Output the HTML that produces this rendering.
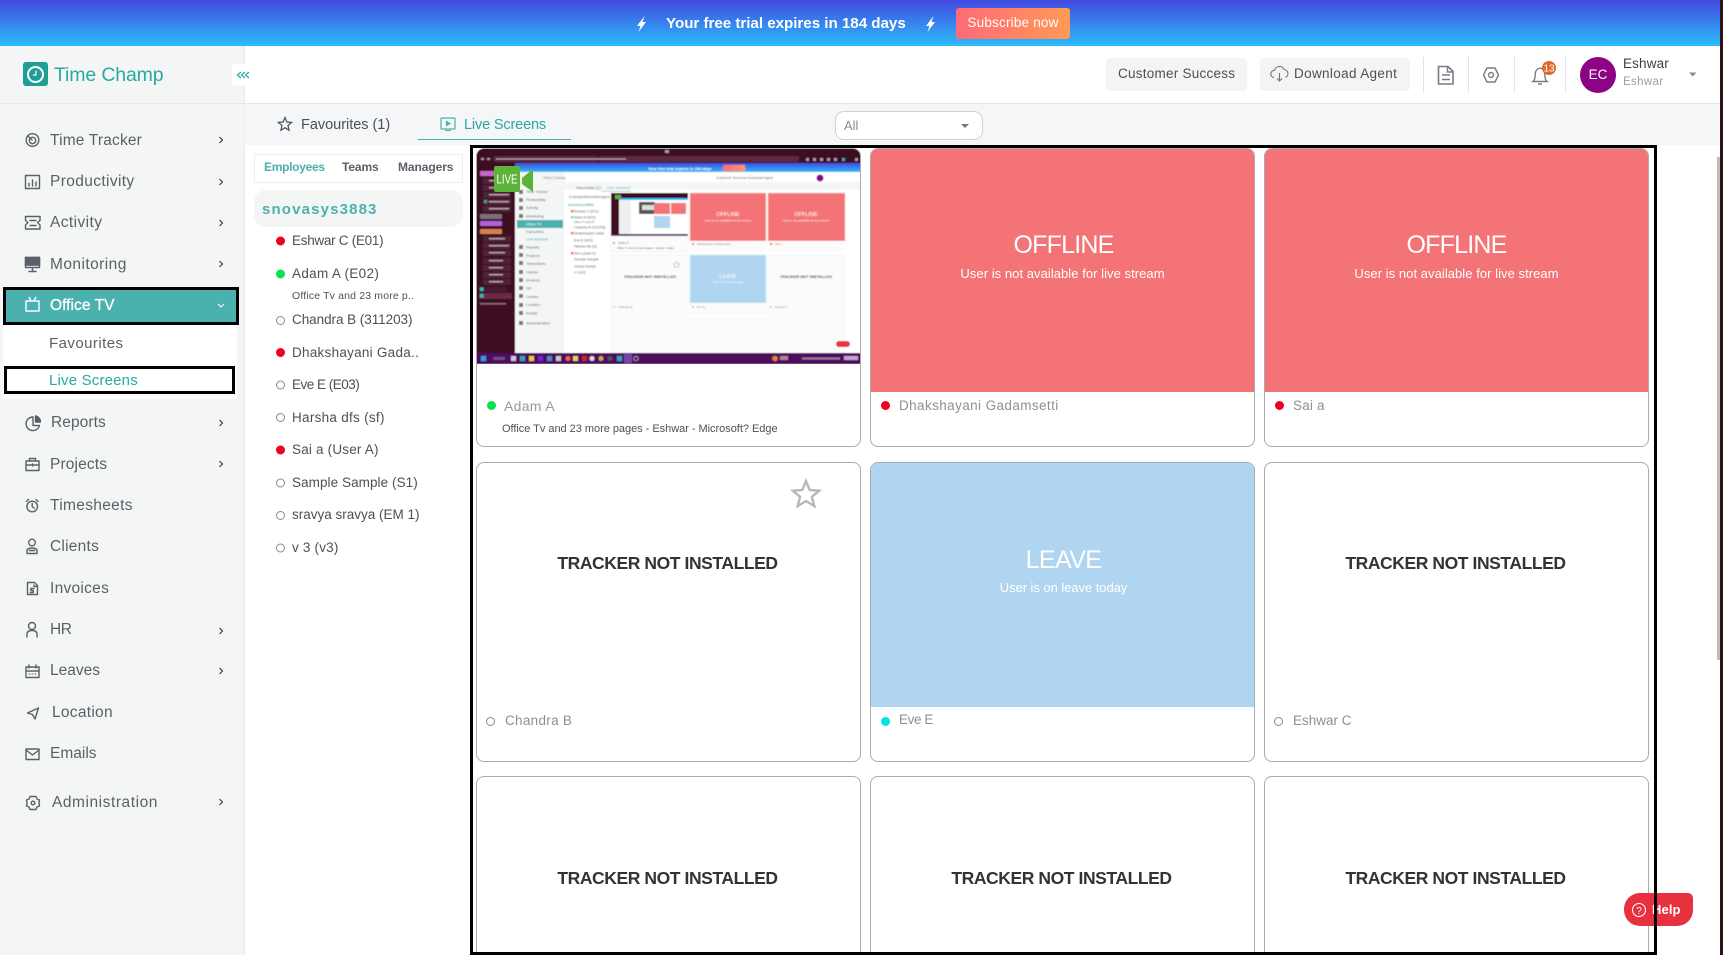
<!DOCTYPE html>
<html lang="en"><head><meta charset="utf-8"><title>Time Champ</title>
<style>
html,body{margin:0;padding:0;width:1723px;height:955px;overflow:hidden}
body{background:#fff;font-family:"Liberation Sans",sans-serif;color:#555}
#w{position:relative;width:1723px;height:955px;overflow:hidden}
.b{position:absolute;box-sizing:border-box}
.t{position:absolute;white-space:nowrap;line-height:20px;height:20px}
.m{font-size:15.5px;color:#5b6068;left:50px}
.l{font-size:13.5px;color:#4c5056;left:292px}
.card{position:absolute;box-sizing:border-box;width:385px;background:#fff;border:1.3px solid #acacac;border-radius:8px;overflow:hidden}
.tni{font-size:17.5px;font-weight:bold;color:#333;letter-spacing:-.42px;text-align:center;width:381px}
.off{font-size:25px;color:#fff;text-align:center;width:385px;line-height:30px;height:30px;letter-spacing:-.8px}
.sub{font-size:13px;color:#fff;text-align:center;width:385px;letter-spacing:.05px}
.nm{font-size:13.5px;color:#909090}
</style></head><body><div id="w">

<div class="b" style="left:0;top:0;width:1723px;height:46px;background:linear-gradient(180deg,#4249df 0%,#2cbdfb 100%)"></div>
<div class="t" style="left:666px;top:14px;font-size:15.2px;font-weight:bold;color:#fff;letter-spacing:-.04px">Your free trial expires in 184 days</div>
<div class="b" style="left:956px;top:8px;width:114px;height:31px;border-radius:3px;background:linear-gradient(90deg,#ff6a76,#ff9a56)"></div>
<div class="t" style="left:956px;width:114px;text-align:center;top:13px;font-size:13.5px;color:#fff;letter-spacing:.2px">Subscribe now</div>

<div class="b" style="left:0;top:46px;width:245px;height:909px;background:#f4f6f6;border-right:1.5px solid #e9ebeb"></div>
<div class="b" style="left:0;top:103px;width:1720px;height:1px;background:#e6e8e8"></div>
<div class="t" style="left:54px;top:65px;font-size:19.5px;color:#2aa8a2;letter-spacing:-.14px">Time Champ</div>
<div class="b" style="left:232px;top:64px;width:23px;height:22px;background:#fff;border-radius:4px"></div>

<div class="t m" style="top:131px;letter-spacing:.18px">Time Tracker</div>
<div class="t m" style="top:172px;letter-spacing:.37px">Productivity</div>
<div class="t m" style="top:213px;letter-spacing:.41px">Activity</div>
<div class="t m" style="top:255px;letter-spacing:.44px">Monitoring</div>

<div class="b" style="left:3px;top:287px;width:236px;height:38px;background:#4bb1ae;border:3px solid #000"></div>
<div class="t m" style="top:296px;color:#fff;letter-spacing:.05px;-webkit-text-stroke:.3px #fff">Office TV</div>
<div class="b" style="left:3px;top:325px;width:234px;height:74px;background:#fff"></div>
<div class="t m" style="top:334px;left:49px;font-size:15px;letter-spacing:.44px">Favourites</div>
<div class="b" style="left:4px;top:366px;width:231px;height:28px;border:3px solid #000"></div>
<div class="t m" style="top:371px;left:49px;font-size:15px;color:#2aa8a2;letter-spacing:.18px">Live Screens</div>

<div class="t m" style="top:413px;left:51px;letter-spacing:.08px">Reports</div>
<div class="t m" style="top:455px;letter-spacing:.14px">Projects</div>
<div class="t m" style="top:496px;letter-spacing:.33px">Timesheets</div>
<div class="t m" style="top:537px;letter-spacing:.24px">Clients</div>
<div class="t m" style="top:579px;letter-spacing:.28px">Invoices</div>
<div class="t m" style="top:620px;letter-spacing:-.4px">HR</div>
<div class="t m" style="top:661px;letter-spacing:0">Leaves</div>
<div class="t m" style="top:703px;left:52px;letter-spacing:.28px">Location</div>
<div class="t m" style="top:744px;letter-spacing:0">Emails</div>
<div class="t m" style="top:793px;left:52px;letter-spacing:.55px">Administration</div>

<div class="b" style="left:1106px;top:58px;width:141px;height:33px;background:#f4f4f4;border-radius:4px"></div>
<div class="t" style="left:1118px;top:64px;font-size:13.5px;color:#4c5056;letter-spacing:.25px">Customer Success</div>
<div class="b" style="left:1260px;top:58px;width:150px;height:33px;background:#f4f4f4;border-radius:4px"></div>
<div class="t" style="left:1294px;top:64px;font-size:13.5px;color:#4c5056;letter-spacing:.35px">Download Agent</div>
<div class="b" style="left:1423px;top:57px;width:1px;height:36px;background:#e4e4e4"></div>
<div class="b" style="left:1468px;top:57px;width:1px;height:36px;background:#e4e4e4"></div>
<div class="b" style="left:1514px;top:57px;width:1px;height:36px;background:#e4e4e4"></div>
<div class="b" style="left:1565px;top:57px;width:1px;height:36px;background:#e4e4e4"></div>
<div class="b" style="left:1580px;top:57px;width:36px;height:36px;border-radius:50%;background:#8e0284"></div>
<div class="t" style="left:1580px;width:36px;text-align:center;top:65px;font-size:13.5px;color:#fff">EC</div>
<div class="t" style="left:1623px;top:54px;font-size:13.5px;color:#3c3f46;letter-spacing:.15px">Eshwar</div>
<div class="t" style="left:1623px;top:72px;font-size:11.5px;color:#a39ca0;letter-spacing:.35px">Eshwar</div>

<div class="b" style="left:245px;top:104px;width:1475px;height:41px;background:#f4f6f7"></div>
<div class="t" style="left:301px;top:115px;font-size:14.5px;color:#4c5056;letter-spacing:-.02px">Favourites (1)</div>
<div class="t" style="left:464px;top:115px;font-size:14.5px;color:#2aa8a2;letter-spacing:-.15px">Live Screens</div>
<div class="b" style="left:418px;top:139px;width:153px;height:1.4px;background:#4bb1ae"></div>
<div class="b" style="left:835px;top:111px;width:148px;height:29px;background:#fff;border:1px solid #d2d0d3;border-radius:9px"></div>
<div class="t" style="left:844px;top:116px;font-size:13px;color:#8a8890">All</div>

<div class="b" style="left:254px;top:154px;width:209px;height:29px;border:1px solid #eee"></div>
<div class="t" style="left:264px;top:157px;font-size:12px;font-weight:bold;color:#4bb1ae;letter-spacing:-.29px">Employees</div>
<div class="t" style="left:342px;top:157px;font-size:12px;font-weight:bold;color:#5b6068;letter-spacing:-.1px">Teams</div>
<div class="t" style="left:398px;top:157px;font-size:12px;font-weight:bold;color:#5b6068;letter-spacing:-.08px">Managers</div>
<div class="b" style="left:254px;top:190px;width:209px;height:37px;background:#f4f6f6;border-radius:12px"></div>
<div class="t" style="left:262px;top:200px;font-size:15px;font-weight:bold;color:#4bb1ae;letter-spacing:1.15px">snovasys3883</div>

<div class="t l" style="top:231px;letter-spacing:-.28px">Eshwar C (E01)</div>
<div class="t l" style="top:264px;letter-spacing:.32px">Adam A (E02)</div>
<div class="t" style="left:292px;top:286px;font-size:10.5px;color:#4c5056;letter-spacing:.16px">Office Tv and 23 more p..</div>
<div class="t l" style="top:310px;letter-spacing:-.05px">Chandra B (311203)</div>
<div class="t l" style="top:343px;letter-spacing:.26px">Dhakshayani Gada..</div>
<div class="t l" style="top:375px;letter-spacing:-.5px">Eve E (E03)</div>
<div class="t l" style="top:408px;letter-spacing:.28px">Harsha dfs (sf)</div>
<div class="t l" style="top:440px;letter-spacing:.19px">Sai a (User A)</div>
<div class="t l" style="top:473px;letter-spacing:.07px">Sample Sample (S1)</div>
<div class="t l" style="top:505px;letter-spacing:0">sravya sravya (EM 1)</div>
<div class="t l" style="top:538px;letter-spacing:.19px">v 3 (v3)</div>

<!-- Row 1 -->
<div class="card" style="left:476px;top:148px;height:299px">
<svg width="385" height="216" viewBox="0 0 385 216" style="position:absolute;left:-1px;top:-1px;display:block">
<defs><filter id="bl" x="0" y="0" width="100%" height="100%"><feGaussianBlur stdDeviation=".42"/></filter>
<linearGradient id="bn" x1="0" y1="0" x2="0" y2="1"><stop offset="0" stop-color="#4249df"/><stop offset="1" stop-color="#2cbdfb"/></linearGradient>
<linearGradient id="sb" x1="0" y1="0" x2="1" y2="0"><stop offset="0" stop-color="#ff6a76"/><stop offset="1" stop-color="#ff9a56"/></linearGradient></defs>
<g filter="url(#bl)" font-family="Liberation Sans, sans-serif">
<rect width="385" height="216" fill="#3e0a20"/>
<rect x="17" y="8" width="106" height="6" rx="3" fill="#5b2b3e"/><rect x="123" y="8" width="200" height="6" fill="#5b2b3e"/>
<rect x="20" y="10.5" width="130" height="1" fill="#b8a8b0"/>
<g fill="#a896a0"><rect x="5" y="10" width="3" height="2"/><rect x="11" y="10" width="3" height="2"/>
<rect x="189" y="2" width="4" height="3"/><rect x="330" y="10" width="3" height="3"/><rect x="337" y="10" width="3" height="3"/><rect x="344" y="10" width="3" height="3"/><rect x="351" y="10" width="3" height="3"/><rect x="358" y="10" width="3" height="3"/><rect x="366" y="10" width="3" height="3" fill="#3aa"/><rect x="379" y="10" width="3" height="3"/></g>
<!-- left tabs -->
<rect x="4" y="23" width="33" height="5" rx="1" fill="#c466c8"/>
<g fill="#4f2436"><rect x="7" y="30" width="28" height="6"/><rect x="7" y="37" width="28" height="6"/><rect x="7" y="44" width="28" height="6"/><rect x="7" y="51" width="28" height="6"/><rect x="7" y="58" width="28" height="6"/></g>
<g fill="#22a8a0"><rect x="8" y="52" width="3" height="3"/></g>
<g fill="#b8a4ae"><rect x="13" y="32" width="20" height="1.400"/><rect x="13" y="39" width="20" height="1.400"/><rect x="13" y="46" width="20" height="1.400"/><rect x="13" y="53" width="20" height="1.400"/><rect x="13" y="60" width="20" height="1.400"/></g>
<rect x="4" y="66" width="22" height="5" rx="1" fill="#7c7078"/>
<rect x="4" y="73" width="22" height="5" rx="1" fill="#b060d8"/>
<rect x="4" y="81" width="22" height="5" rx="1" fill="#d88050"/>
<g fill="#4f2436"><rect x="7" y="88" width="28" height="6"/><rect x="7" y="95" width="28" height="6"/><rect x="7" y="102" width="28" height="6"/><rect x="7" y="110" width="28" height="6"/><rect x="7" y="117" width="28" height="6"/><rect x="7" y="124" width="28" height="6"/><rect x="7" y="131" width="28" height="6"/></g>
<g fill="#b8a4ae"><rect x="13" y="90" width="16" height="1.400"/><rect x="13" y="97" width="20" height="1.400"/><rect x="13" y="104" width="16" height="1.400"/><rect x="13" y="112" width="14" height="1.400"/><rect x="13" y="119" width="14" height="1.400"/><rect x="13" y="126" width="14" height="1.400"/><rect x="13" y="133" width="14" height="1.400"/></g>
<rect x="3" y="139" width="28" height="5" fill="#4a1a30"/><rect x="4" y="139.5" width="3.5" height="3.5" fill="#22c0b0"/>
<rect x="3" y="145" width="33" height="6" rx="1" fill="#6a2c44"/><rect x="4" y="146" width="3.5" height="3.5" fill="#22c0b0"/>
<rect x="4" y="155" width="26" height="1.5" fill="#8a6a78"/>
<!-- inner page -->
<rect x="39" y="15" width="346" height="190" fill="#fff"/>
<rect x="39" y="15" width="346" height="9" fill="url(#bn)"/>
<text x="172" y="22" font-size="4" fill="#fff" font-weight="bold">Your free trial expires in 184 days</text>
<rect x="247" y="17" width="22" height="6" fill="url(#sb)"/>
<rect x="39" y="24" width="49" height="181" fill="#f4f6f6"/>
<rect x="88" y="34" width="297" height="8" fill="#f4f6f7"/>
<g fill="#5b6068" font-size="3.8">
<text x="50" y="45">Time Tracker</text><text x="50" y="53">Productivity</text><text x="50" y="61">Activity</text><text x="50" y="69.500">Monitoring</text>
<text x="50" y="85">Favourites</text><text x="50" y="100.500">Reports</text><text x="50" y="109">Projects</text><text x="50" y="117">Timesheets</text><text x="50" y="125.500">Clients</text><text x="50" y="133.500">Invoices</text><text x="50" y="141.500">HR</text><text x="50" y="150">Leaves</text><text x="50" y="158">Location</text><text x="50" y="166.500">Emails</text><text x="50" y="176.500">Administration</text></g>
<g fill="#777"><rect x="43" y="42" width="4" height="4"/><rect x="43" y="50" width="4" height="4"/><rect x="43" y="58" width="4" height="4"/><rect x="43" y="66" width="4" height="4"/><rect x="43" y="97" width="4" height="4"/><rect x="43" y="105" width="4" height="4"/><rect x="43" y="113" width="4" height="4"/><rect x="43" y="122" width="4" height="4"/><rect x="43" y="130" width="4" height="4"/><rect x="43" y="138" width="4" height="4"/><rect x="43" y="146" width="4" height="4"/><rect x="43" y="155" width="4" height="4"/><rect x="43" y="163" width="4" height="4"/><rect x="43" y="173" width="4" height="4"/></g>
<rect x="41" y="72" width="46" height="8" fill="#4bb1ae"/><text x="50" y="77.500" font-size="3.8" fill="#fff">Office TV</text>
<text x="50" y="92.500" font-size="3.8" fill="#2aa8a2">Live Screens</text>
<text x="67" y="31" font-size="4" fill="#777">Time Champ</text>
<text x="100" y="41" font-size="4" fill="#555">Favourites (1)</text><text x="131" y="41" font-size="4" fill="#4bb1ae">Live Screens</text>
<rect x="125" y="43" width="30" height=".6" fill="#4bb1ae"/>
<text x="240" y="31" font-size="3.6" fill="#666">Customer Success</text><text x="271" y="31" font-size="3.6" fill="#666">Download Agent</text>
<circle cx="344" cy="30" r="3.500" fill="#8e0284"/>
<g font-size="3.400" fill="#666"><text x="93" y="50">Employees</text><text x="109" y="50">Teams</text><text x="119" y="50">Managers</text></g>
<text x="92" y="58" font-size="3.800" font-weight="bold" fill="#4bb1ae">snovasys3883</text>
<g font-size="3.500" fill="#555"><text x="98" y="64.500">Eshwar C (E01)</text><text x="98" y="70.500">Adam A (E02)</text><text x="98" y="75" font-size="2.800">Office Tv and 23</text><text x="98" y="80.500">Chandra B (311203)</text><text x="98" y="86.500">Dhakshayani Gada</text><text x="98" y="93.500">Eve E (E03)</text><text x="98" y="99.500">Harsha dfs (sf)</text><text x="98" y="106.500">Sai a (User A)</text><text x="98" y="112.500">Sample Sample</text><text x="98" y="119.500">sravya sravya</text><text x="98" y="125.500">v 3 (v3)</text></g>
<g><rect x="95" y="62" width="2.200" height="2.200" fill="#f02"/><rect x="95" y="68" width="2.200" height="2.200" fill="#1d8"/><rect x="95" y="84" width="2.200" height="2.200" fill="#f02"/><rect x="95" y="104" width="2.200" height="2.200" fill="#f02"/></g>
<!-- nested thumb -->
<rect x="135" y="45" width="77" height="43" fill="#3e0a20"/>
<rect x="143" y="50" width="69" height="36" fill="#fff"/>
<rect x="143" y="50" width="69" height="2" fill="#2cbdfb"/>
<rect x="143" y="52" width="12" height="34" fill="#eef0f0"/>
<rect x="163" y="54" width="16" height="12" fill="#555"/><rect x="166" y="57" width="12" height="5" fill="#ddd"/>
<rect x="178" y="55" width="16" height="11" fill="#f47377"/><rect x="195" y="55" width="15" height="11" fill="#f47377"/>
<rect x="178" y="68" width="16" height="12" fill="#b0d5f0"/>
<rect x="139" y="47" width="6" height="4" fill="#5bb33a"/>
<rect x="135" y="86" width="77" height="2" fill="#4e0f5e"/>
<rect x="135" y="88" width="77" height="16" fill="#fbfbfb" stroke="#ebebeb" stroke-width=".5"/>
<circle cx="138" cy="95" r="1.100" fill="#1d8"/>
<text x="142" y="96" font-size="3.200" fill="#888">Adam A</text>
<text x="141" y="101" font-size="2.800" fill="#666">Office Tv and 23 more pages - Eshwar - Edge</text>
<!-- red -->
<rect x="214" y="45" width="76" height="48" fill="#f47377" stroke="#f8d8c0" stroke-width=".6"/><rect x="292" y="45" width="77" height="48" fill="#f47377" stroke="#f8c8d0" stroke-width=".6"/>
<g fill="#fff" text-anchor="middle"><text x="252" y="68" font-size="5.500">OFFLINE</text><text x="252" y="73.500" font-size="3">User is not available for live stream</text><text x="330" y="68" font-size="5.500">OFFLINE</text><text x="330" y="73.500" font-size="3">User is not available for live stream</text></g>
<rect x="214" y="93" width="76" height="11" fill="#fbfbfb"/><rect x="292" y="93" width="77" height="11" fill="#fbfbfb"/>
<circle cx="217" cy="96" r="1" fill="#f02"/><circle cx="295" cy="96" r="1" fill="#f02"/>
<text x="221" y="97" font-size="3" fill="#888">Dhakshayani Gadamsetti</text><text x="299" y="97" font-size="3" fill="#888">Sai a</text>
<!-- row 2 -->
<rect x="135" y="107" width="77" height="60" fill="#fbfbfb" stroke="#eee" stroke-width=".5"/>
<rect x="292" y="107" width="77" height="60" fill="#fbfbfb" stroke="#eee" stroke-width=".5"/>
<rect x="214" y="107" width="76" height="48" fill="#b0d5f0" stroke="#c8f0fa" stroke-width=".6"/>
<rect x="214" y="155" width="76" height="12" fill="#fbfbfb"/>
<text x="252" y="130" text-anchor="middle" font-size="5.500" fill="#fff">LEAVE</text><text x="252" y="135" text-anchor="middle" font-size="3" fill="#fff">User is on leave today</text>
<path d="M200.500 113l1 2.500 2.500.2-2 1.600.700 2.500-2.200-1.400-2.200 1.400.700-2.500-2-1.600 2.500-.2z" fill="none" stroke="#aaa" stroke-width=".5"/>
<g font-size="4" font-weight="bold" fill="#333" text-anchor="middle"><text x="174" y="130">TRACKER NOT INSTALLED</text><text x="330" y="130">TRACKER NOT INSTALLED</text><text x="174" y="193">TRACKER NOT INSTALLED</text><text x="252" y="193">TRACKER NOT INSTALLED</text><text x="330" y="193">TRACKER NOT INSTALLED</text></g>
<circle cx="138" cy="159" r="1" fill="none" stroke="#aaa" stroke-width=".4"/><text x="142" y="160" font-size="3" fill="#888">Chandra B</text>
<circle cx="217" cy="159" r="1" fill="#0ee"/><text x="221" y="160" font-size="3" fill="#888">Eve E</text>
<circle cx="295" cy="159" r="1" fill="none" stroke="#aaa" stroke-width=".4"/><text x="299" y="160" font-size="3" fill="#888">Eshwar C</text>
<rect x="135" y="170" width="77" height="35" fill="#fbfbfb" stroke="#eee" stroke-width=".5"/><rect x="214" y="170" width="76" height="35" fill="#fbfbfb" stroke="#eee" stroke-width=".5"/><rect x="292" y="170" width="77" height="35" fill="#fbfbfb" stroke="#eee" stroke-width=".5"/>
<rect x="360" y="193" width="14" height="6" rx="3" fill="#e8313f"/>
<!-- taskbar -->
<rect y="205" width="385" height="11" fill="#4e0f5e"/>
<g><rect x="5" y="208" width="5" height="5" fill="#2a9fe8"/><rect x="17" y="209" width="12" height="3" rx="1" fill="#7a4a8a"/><rect x="35" y="208" width="5" height="5" fill="#ccd"/><rect x="44" y="208" width="5" height="5" fill="#2ab"/><rect x="53" y="208" width="5" height="5" fill="#ec3"/><rect x="62" y="208" width="5" height="5" fill="#72c"/><rect x="71" y="208" width="5" height="5" fill="#48c"/><rect x="80" y="208" width="5" height="5" fill="#ccb"/><circle cx="92" cy="210.500" r="2.500" fill="#e64"/><rect x="97" y="208" width="5" height="5" fill="#ec5"/><rect x="106" y="208" width="5" height="5" fill="#c22"/><circle cx="116" cy="210.500" r="2.500" fill="#ddd"/><circle cx="125" cy="210.500" r="2.500" fill="#ca4"/><circle cx="134" cy="210.500" r="2.500" fill="#555"/><rect x="141" y="208" width="5" height="5" fill="#2ab"/><rect x="148" y="206" width="8" height="9" fill="#74a"/><circle cx="160" cy="210.500" r="2.200" fill="none" stroke="#ccc" stroke-width=".6"/>
<circle cx="299" cy="210.500" r="2.800" fill="#e88020"/><rect x="304" y="208" width="8" height="4" fill="#a88"/><rect x="326" y="209.500" width="38" height="2" fill="#9a7aa0"/><rect x="368" y="208" width="14" height="4" fill="#c0a8c8"/></g>
</g>
<!-- LIVE badge -->
<rect x="18" y="18" width="26" height="26" rx="2" fill="#5bb33a"/>
<path d="M46 30l11-9v23l-11-8z" fill="#5bb33a"/>
<text x="31" y="35.500" text-anchor="middle" font-size="13" fill="#fff" font-family="Liberation Sans, sans-serif" textLength="21" lengthAdjust="spacingAndGlyphs">LIVE</text>
</svg>
<div class="t" style="left:27px;top:247px;font-size:14px;color:#999;letter-spacing:.3px">Adam A</div>
<div class="t" style="left:25px;top:270px;font-size:11px;color:#4c5056;letter-spacing:-.03px">Office Tv and 23 more pages - Eshwar - Microsoft? Edge</div>
<div class="b" style="left:9.500px;top:252px;width:9px;height:9px;border-radius:50%;background:#0be04f"></div>
</div>

<div class="card" style="left:870px;top:148px;height:299px">
<div class="b" style="left:0;top:0;width:385px;height:243px;background:#f47377"></div>
<div class="t off" style="left:0;top:81px">OFFLINE</div>
<div class="t sub" style="left:-1px;top:115px">User is not available for live stream</div>
<div class="t nm" style="left:28px;top:247px;letter-spacing:.4px">Dhakshayani Gadamsetti</div>
<div class="b" style="left:9.500px;top:252px;width:9px;height:9px;border-radius:50%;background:#f00020"></div>
</div>

<div class="card" style="left:1264px;top:148px;height:299px">
<div class="b" style="left:0;top:0;width:385px;height:243px;background:#f47377"></div>
<div class="t off" style="left:-1px;top:81px">OFFLINE</div>
<div class="t sub" style="left:-1px;top:115px">User is not available for live stream</div>
<div class="t nm" style="left:28px;top:247px;letter-spacing:.2px">Sai a</div>
<div class="b" style="left:9.500px;top:252px;width:9px;height:9px;border-radius:50%;background:#f00020"></div>
</div>

<!-- Row 2 -->
<div class="card" style="left:476px;top:462px;height:300px">
<div class="t tni" style="left:0;top:90px">TRACKER NOT INSTALLED</div>
<div class="t nm" style="left:28px;top:248px;letter-spacing:.3px">Chandra B</div>
<div class="b" style="left:9px;top:254px;width:9px;height:9px;border-radius:50%;border:1.2px solid #888"></div>
</div>
<div class="card" style="left:870px;top:462px;height:300px">
<div class="b" style="left:0;top:0;width:385px;height:244px;background:#b0d5f0"></div>
<div class="t off" style="left:0;top:82px;letter-spacing:-.6px">LEAVE</div>
<div class="t sub" style="left:0;top:115px;letter-spacing:-.05px">User is on leave today</div>
<div class="t nm" style="left:28px;top:247px;letter-spacing:-.4px">Eve E</div>
<div class="b" style="left:9.500px;top:254px;width:9px;height:9px;border-radius:50%;background:#00e5e0"></div>
</div>
<div class="card" style="left:1264px;top:462px;height:300px">
<div class="t tni" style="left:0;top:90px">TRACKER NOT INSTALLED</div>
<div class="t nm" style="left:28px;top:248px;letter-spacing:0">Eshwar C</div>
<div class="b" style="left:9px;top:254px;width:9px;height:9px;border-radius:50%;border:1.2px solid #888"></div>
</div>

<!-- Row 3 -->
<div class="card" style="left:476px;top:776px;height:200px"><div class="t tni" style="left:0;top:91px">TRACKER NOT INSTALLED</div></div>
<div class="card" style="left:870px;top:776px;height:200px"><div class="t tni" style="left:0;top:91px">TRACKER NOT INSTALLED</div></div>
<div class="card" style="left:1264px;top:776px;height:200px"><div class="t tni" style="left:0;top:91px">TRACKER NOT INSTALLED</div></div>

<!-- Help -->
<div class="b" style="left:1624px;top:893px;width:69px;height:33px;background:#e8313f;border-radius:16px 5px 16px 16px"></div>
<div class="t" style="left:1652px;top:900px;font-size:13px;font-weight:bold;color:#fff;letter-spacing:.1px">Help</div>

<!-- scrollbar + edge -->
<div class="b" style="left:1717px;top:157px;width:3px;height:503px;background:#bdbdbd"></div>
<div class="b" style="left:1720px;top:0;width:3px;height:955px;background:#2c1410"></div>

<!-- icons -->
<svg width="1723" height="955" viewBox="0 0 1723 955" style="position:absolute;left:0;top:0;pointer-events:none">
<!-- bolts -->
<path d="M644.500 16l-7.500 10h3.500l-2 6 7.500-10h-3.500z" fill="#fff"/><path d="M933.500 16l-7.500 10h3.500l-2 6 7.500-10h-3.500z" fill="#fff"/>
<!-- logo -->
<rect x="23" y="62" width="25" height="24" rx="3" fill="#1e9e96"/>
<circle cx="35.500" cy="74.500" r="7.500" fill="none" stroke="#fff" stroke-width="2"/>
<path d="M36 70.500v4.500h-3" fill="none" stroke="#fff" stroke-width="1.200"/>
<!-- collapse -->
<path d="M241 72l-3.500 3 3.500 3M245 72l-3.500 3 3.500 3M249 72l-3.500 3 3.500 3" fill="none" stroke="#2aa8a2" stroke-width="1.200"/>
<g fill="none" stroke="#5b6068" stroke-width="1.400" stroke-linecap="round" stroke-linejoin="round">
<!-- time tracker -->
<circle cx="32.500" cy="140" r="6.300"/><circle cx="32.500" cy="140.500" r="3.200"/><path d="M28 136l4 4"/>
<!-- productivity -->
<rect x="25.500" y="175.500" width="14" height="13"/><path d="M29 186v-2.500M32.500 186v-6M36 186v-4"/>
<!-- activity -->
<path d="M25.500 216.500h14.500v4l-2.500 2 2.500 2.500v4h-14.500v-4l2.500-2.500-2.500-2z"/><path d="M30 220.500h6M30 225.500h6"/>
<!-- monitoring -->
<rect x="25.500" y="257.500" width="14" height="10"/><path d="M25.500 265h14M32.500 268v3M29 271.500h7"/>
<rect x="25.500" y="257.500" width="14" height="7.500" fill="#5b6068"/>
<!-- reports -->
<path d="M33 417a6.800 6.800 0 1 0 6.500 8.500h-6.500z"/><path d="M35.500 416v6h5a6 6 0 0 0-5-6z" fill="#5b6068"/>
<!-- projects -->
<rect x="26" y="461" width="13" height="9.500"/><path d="M29.500 461v-2.500h6v2.500M26 465h13M32.500 464v2"/>
<!-- timesheets -->
<circle cx="32.200" cy="506.500" r="5.300"/><path d="M32.200 503.500v3.200l2 1.300M26.500 501.500l2-2M38 501.500l-2-2"/>
<!-- clients -->
<circle cx="32" cy="542.500" r="3.300"/><path d="M27 553.500v-2.500q0-3 5-3t5 3v2.500zM29.500 550.500h5"/>
<!-- invoices -->
<path d="M27.500 582.500h7l3 3v9h-10z"/><path d="M34 585l0 1.500h3M33.800 588.500h-3v2h2.500v2h-3"/>
<!-- hr -->
<circle cx="32" cy="626" r="3.500"/><path d="M27 637v-3q0-3.500 5-3.500t5 3.500v3"/>
<!-- leaves -->
<rect x="26" y="667" width="13" height="10.500"/><path d="M26 671h13M29 665v3M36 665v3"/><path d="M29 674h1M32 674h1M35 674h1" stroke-width="1"/>
<!-- location -->
<path d="M27.500 713l11-5-3.500 11-2.500-4.500z"/>
<!-- emails -->
<rect x="26" y="749" width="13" height="10.500"/><path d="M26 750l6.500 5 6.500-5"/>
<!-- admin gear -->
<path d="M30 796.500h6l1 2.500 2.500 1-.5 3 .5 3-2.500 1-1 2.500h-6l-1-2.500-2.500-1 .5-3-.5-3 2.500-1z"/><circle cx="33" cy="803" r="1.800"/>
</g>
<!-- office tv icon -->
<g fill="none" stroke="#fff" stroke-width="1.400"><rect x="26" y="301" width="13" height="10"/><path d="M29 297l2 4M36 297l-2 4"/></g>
<!-- chevrons -->
<g fill="none" stroke="#33363a" stroke-width="1.100">
<path d="M219.500 137l3 3-3 3M219.500 179l3 3-3 3M219.500 220l3 3-3 3M219.500 261l3 3-3 3M219.500 420l3 3-3 3M219.500 461l3 3-3 3M219.500 628l3 3-3 3M219.500 668l3 3-3 3M219.500 799l3 3-3 3"/></g>
<path d="M218 304l3 3 3-3" fill="none" stroke="#fff" stroke-width="1"/>
<!-- tabs star + play -->
<path d="M285 117.500l1.900 4.500 4.800.4-3.700 3.100 1.100 4.700-4.100-2.500-4.100 2.500 1.100-4.700-3.700-3.100 4.800-.4z" fill="none" stroke="#4c5056" stroke-width="1.200"/>
<rect x="441" y="118" width="14" height="11" rx="1" fill="none" stroke="#4bb1ae" stroke-width="1.200"/><path d="M446 120.500l5 3-5 3z" fill="#4bb1ae"/><path d="M445 130.500h6" stroke="#4bb1ae"/>
<!-- dropdown caret -->
<path d="M961 124h8l-4 4z" fill="#777"/>
<!-- list dots -->
<g fill="#f00020"><circle cx="280.500" cy="241" r="4.500"/><circle cx="280.500" cy="352.500" r="4.500"/><circle cx="280.500" cy="450" r="4.500"/></g>
<circle cx="280.500" cy="274" r="4.500" fill="#0be04f"/>
<g fill="none" stroke="#8a8a8a" stroke-width="1"><circle cx="280.500" cy="320.500" r="4"/><circle cx="280.500" cy="385" r="4"/><circle cx="280.500" cy="417.500" r="4"/><circle cx="280.500" cy="483" r="4"/><circle cx="280.500" cy="515.500" r="4"/><circle cx="280.500" cy="548" r="4"/></g>
<!-- card star -->
<path d="M806 481l3.700 9 9.500.7-7.300 6.100 2.400 9.300-8.300-5.100-8.300 5.100 2.400-9.300-7.300-6.100 9.500-.7z" fill="none" stroke="#b8b8b8" stroke-width="2.400"/>
<!-- header icons -->
<path d="M1274 77.500a3.500 3.500 0 0 1 .5-7 5 5 0 0 1 9.500-1 4.200 4.200 0 0 1 1.500 8M1279.500 73v7.500M1277 78.500l2.500 2.500 2.500-2.500" fill="none" stroke="#70757a" stroke-width="1.100"/>
<path d="M1438.500 66.500h9.500l5 5v12.500h-14.500z" fill="none" stroke="#7a7a85" stroke-width="1.600"/><path d="M1447.500 67v5h5M1442 75h8M1442 79.500h8" fill="none" stroke="#7a7a85" stroke-width="1.400"/>
<path d="M1487 68h8l3.500 7-3.500 7h-8l-3.500-7z" fill="none" stroke="#7a7a85" stroke-width="1.400" stroke-linejoin="round"/><circle cx="1491" cy="75" r="2.500" fill="none" stroke="#7a7a85" stroke-width="1.400"/>
<path d="M1533 81.500q2.200-1.500 2.200-7t4.800-6.500q4.800 1 4.800 6.500t2.200 7zM1538 84h4" fill="none" stroke="#7a7a85" stroke-width="1.400"/>
<circle cx="1549" cy="68" r="7" fill="#e0682b"/>
<text x="1549" y="71.500" text-anchor="middle" font-size="10" fill="#fff" font-family="Liberation Sans, sans-serif">13</text>
<path d="M1689 72.500h7.500l-3.750 4z" fill="#8a8a95"/>
<!-- help icon -->
<circle cx="1639" cy="910" r="6.500" fill="none" stroke="#fff" stroke-width="1.100"/>
<text x="1639" y="914" text-anchor="middle" font-size="10" fill="#fff" font-family="Liberation Sans, sans-serif">?</text>
</svg>

<!-- black frame -->
<div class="b" style="left:470px;top:145px;width:1187px;height:810px;border:3px solid #000;pointer-events:none"></div>
</div></body></html>
